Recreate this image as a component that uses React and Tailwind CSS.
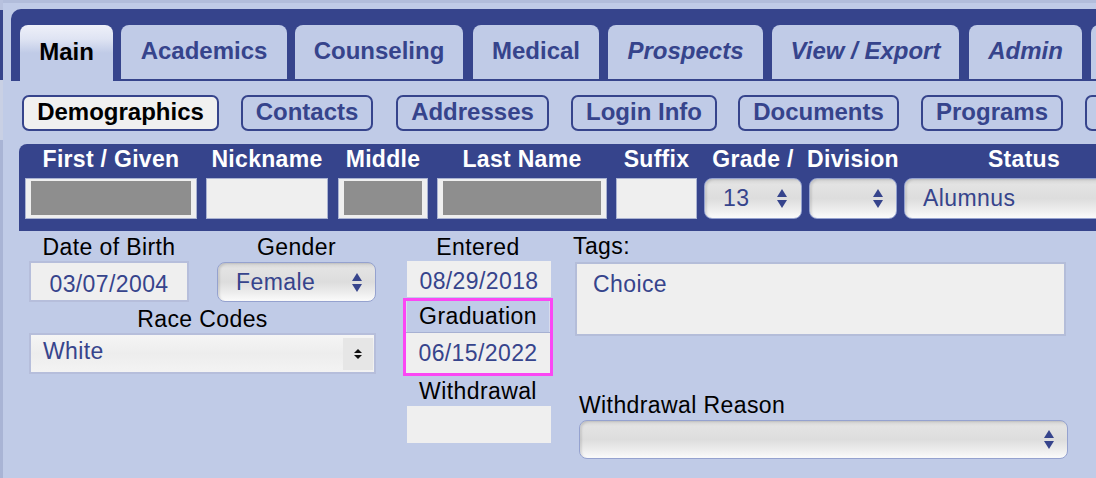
import React from 'react';

const BLUE = '#36448c';

function UpDown({ color = BLUE, w = 10, h1 = 8, gap = 3 }) {
  const H = h1 * 2 + gap;
  return (
    <svg width={w} height={H} viewBox={`0 0 ${w} ${H}`} className="block">
      <path d={`M${w / 2} 0 L${w} ${h1} L0 ${h1} Z`} fill={color} />
      <path d={`M0 ${h1 + gap} L${w} ${h1 + gap} L${w / 2} ${H} Z`} fill={color} />
    </svg>
  );
}

function MacSelect({ className = '', text = '', arrowCls = 'mr-[14px]', textCls = '' }) {
  return (
    <div
      className={`flex items-center rounded-[8px] border border-[#95a2cf] bg-[linear-gradient(to_bottom,#d4d4d4_0%,#e3e3e3_14%,#dddddd_50%,#e9e9e9_72%,#fbfbfb_100%)] shadow-[inset_2px_1px_2px_rgba(0,0,0,0.10)] ${className}`}
    >
      <span className={`flex-1 pl-[18px] text-[23px] leading-none tracking-[0.4px] text-[#36448c] ${textCls}`}>{text}</span>
      <div className={arrowCls}>
        <UpDown />
      </div>
    </div>
  );
}

const tabs = [
  { label: 'Main', cls: 'w-[93px]', active: true },
  { label: 'Academics', cls: 'w-[166px] ml-[8px]' },
  { label: 'Counseling', cls: 'w-[168px] ml-[8px]' },
  { label: 'Medical', cls: 'w-[126px] ml-[10px]' },
  { label: 'Prospects', cls: 'w-[155px] ml-[9px]', italic: true },
  { label: 'View / Export', cls: 'w-[187px] ml-[9px]', italic: true },
  { label: 'Admin', cls: 'w-[113px] ml-[10px]', italic: true },
  { label: '', cls: 'w-[100px] ml-[9px]' },
];

const subs = [
  { label: 'Demographics', cls: 'w-[197px]', active: true },
  { label: 'Contacts', cls: 'w-[132px] ml-[22px]' },
  { label: 'Addresses', cls: 'w-[153px] ml-[23px]' },
  { label: 'Login Info', cls: 'w-[146px] ml-[22px]' },
  { label: 'Documents', cls: 'w-[161px] ml-[21px]' },
  { label: 'Programs', cls: 'w-[142px] ml-[22px]' },
  { label: '', cls: 'w-[60px] ml-[22px]' },
];

function Redacted() {
  return (
    <div className="h-[41px] w-full border border-[#aab3d2] bg-[#efefef] pt-[2px] pb-[3px] px-[5px]">
      <div className="h-full w-full bg-[#8e8e8e]" />
    </div>
  );
}

function Blank() {
  return <div className="h-[41px] w-full border border-[#aab3d2] bg-[#efefef]" />;
}

const cols = [
  { label: 'First / Given', cls: 'w-[172px]', kind: 'red' },
  { label: 'Nickname', cls: 'w-[122px] ml-[9px]', kind: 'blank' },
  { label: 'Middle', cls: 'w-[90px] ml-[10px]', kind: 'red' },
  { label: 'Last Name', cls: 'w-[170px] ml-[9px]', kind: 'red' },
  { label: 'Suffix', cls: 'w-[81px] ml-[9px]', kind: 'blank' },
  { label: 'Grade /', cls: 'w-[98px] ml-[7px]', kind: 'sel', text: '13', arrow: 'mr-[14px]' },
  { label: 'Division', cls: 'w-[88px] ml-[7px]', kind: 'sel', text: '', arrow: 'mr-[13px]' },
  { label: 'Status', cls: 'w-[240px] ml-[7px]', kind: 'sel', text: 'Alumnus', arrow: 'mr-[14px]' },
];

function Label({ children, cls = '' }) {
  return (
    <div className={`flex items-center text-[23px] leading-none tracking-[0.4px] text-black whitespace-nowrap ${cls}`}>
      {children}
    </div>
  );
}

export default function App() {
  return (
    <div className="font-['Liberation_Sans',Arial,Helvetica,sans-serif] w-[1096px] h-[478px] overflow-hidden bg-[#c0cbe7] flex">
      {/* left edge strip */}
      <div className="w-[3px] shrink-0 bg-[#a9b4d5] flex flex-col">
        <div className="h-[10px] bg-[#b7c1de]" />
        <div className="h-[70px] bg-[#36448c]" />
        <div className="h-[60px] bg-[#c9d0e4]" />
      </div>

      <div className="flex-1 min-w-0 flex flex-col">
        {/* top strip */}
        <div className="h-[9px] shrink-0 border-t-[3px] border-[#b2bddb]" />

        {/* main tabs */}
        <div className="ml-[8px] h-[72px] shrink-0 bg-[#36448c] rounded-tl-[10px] pt-[16px] pl-[9px] flex items-start overflow-hidden">
          {tabs.map((t, i) => (
            <div
              key={i}
              className={`${t.cls} shrink-0 rounded-t-[8px] flex items-center justify-center pb-[3px] text-[24px] leading-none font-bold whitespace-nowrap ${
                t.active
                  ? 'h-[56px] bg-[linear-gradient(to_bottom,#eef0f9_0%,#dfe4f3_25%,#c0cbe7_50%,#c0cbe7_100%)] text-black'
                  : 'h-[54px] bg-[#c0cbe7] text-[#36448c]'
              } ${t.italic ? 'italic' : ''}`}
            >
              {t.label}
            </div>
          ))}
        </div>

        {/* sub tabs */}
        <div className="ml-[19px] mt-[14px] flex shrink-0">
          {subs.map((s, i) => (
            <div
              key={i}
              className={`${s.cls} shrink-0 h-[36px] rounded-[7px] border-2 border-[#36448c] flex items-center justify-center pb-[3px] text-[24px] leading-none font-bold whitespace-nowrap ${
                s.active ? 'bg-[#f0f0f0] text-black' : 'text-[#36448c]'
              }`}
            >
              {s.label}
            </div>
          ))}
        </div>

        {/* name band */}
        <div className="ml-[16px] mt-[13px] h-[87px] shrink-0 bg-[#36448c] rounded-tl-[8px] pl-[6px] flex overflow-hidden">
          {cols.map((c, i) => (
            <div key={i} className={`${c.cls} shrink-0 flex flex-col`}>
              <div className="h-[34px] flex items-center justify-center pb-[3px] text-[23px] leading-none font-bold tracking-[0.3px] text-white whitespace-nowrap">
                {c.label}
              </div>
              {c.kind === 'red' && <Redacted />}
              {c.kind === 'blank' && <Blank />}
              {c.kind === 'sel' && <MacSelect className="h-[41px] w-full" text={c.text} arrowCls={c.arrow} />}
            </div>
          ))}
        </div>

        {/* lower section */}
        <div className="pl-[26px] flex">
          {/* column A */}
          <div className="w-[347px] shrink-0 flex flex-col">
            <div className="flex">
              <div className="w-[160px] flex flex-col">
                <Label cls="h-[30px] pt-[2px] justify-center">Date of Birth</Label>
                <div className="h-[41px] border-2 border-[#b6bedb] bg-[#efefef] flex items-center justify-center pt-[6px] text-[23px] leading-none tracking-[0.4px] text-[#36448c]">
                  03/07/2004
                </div>
              </div>
              <div className="ml-[28px] w-[159px] flex flex-col">
                <Label cls="h-[30px] pt-[2px] justify-center">Gender</Label>
                <MacSelect className="h-[40px] mt-[1px]" text="Female" arrowCls="mr-[13px]" />
              </div>
            </div>
            <Label cls="h-[31px] pt-[3px] justify-center">Race Codes</Label>
            <div className="h-[41px] border-2 border-[#b6bedb] bg-[linear-gradient(to_bottom,#f5f5f5_0%,#ededed_50%,#f3f3f3_100%)] flex items-center">
              <span className="flex-1 pl-[12px] pb-[4px] text-[23px] leading-none tracking-[0.4px] text-[#36448c]">White</span>
              <div className="w-[30px] h-[32px] mr-[1px] bg-[#e6e6e6] flex items-center justify-center">
                <UpDown color="#111111" w={8} h1={4} gap={2} />
              </div>
            </div>
          </div>

          {/* column B */}
          <div className="ml-[27px] w-[150px] shrink-0 flex flex-col">
            <Label cls="h-[30px] pt-[2px] justify-center">Entered</Label>
            <div className="ml-[4px] w-[144px] h-[36px] bg-[#efefef] flex items-center justify-center pt-[4px] text-[23px] leading-none tracking-[0.4px] text-[#36448c]">
              08/29/2018
            </div>
            <div className="mt-[1px] w-[150px] border-[3px] border-[#fb47f4] flex flex-col">
              <Label cls="h-[31px] justify-center border-x border-[#d7dcec]">Graduation</Label>
              <div className="h-[1px] bg-[#a6b0d2]" />
              <div className="h-[40px] bg-[#efefef] flex items-center justify-center text-[23px] leading-none tracking-[0.4px] text-[#36448c]">
                06/15/2022
              </div>
            </div>
            <Label cls="h-[30px] justify-center">Withdrawal</Label>
            <div className="ml-[4px] w-[144px] h-[37px] bg-[#efefef]" />
          </div>

          {/* column C */}
          <div className="ml-[22px] w-[493px] shrink-0 flex flex-col">
            <Label cls="h-[31px] -ml-[2px]">Tags:</Label>
            <div className="w-[491px] h-[74px] border-2 border-[#b4bdd9] bg-[#efefef] pl-[16px] pt-[9px] text-[23px] leading-none tracking-[0.4px] text-[#36448c]">
              Choice
            </div>
            <Label cls="mt-[54px] h-[30px] pl-[4px]">Withdrawal Reason</Label>
            <MacSelect className="ml-[4px] w-[489px] h-[39px]" text="" arrowCls="mr-[13px]" />
          </div>
        </div>
      </div>
    </div>
  );
}
